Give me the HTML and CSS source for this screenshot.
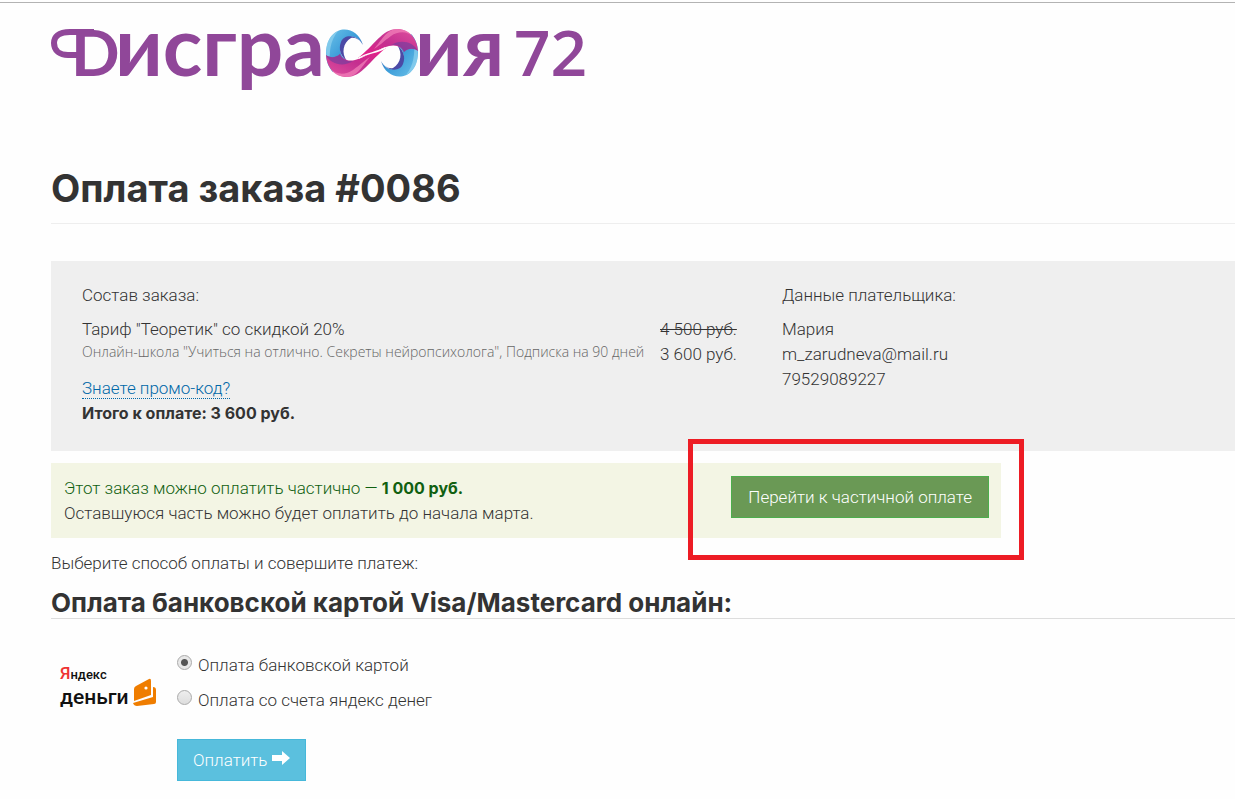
FILE: index.html
```
<!DOCTYPE html>
<html lang="ru">
<head>
  <meta charset="UTF-8">
  <meta name="viewport" content="width=device-width, initial-scale=1.0">
  <title>Оплата заказа #0086</title>
  <link rel="stylesheet" href="styles.css">
</head>
<body>
  <div class="container">
    <header class="header">
      <svg class="logo" width="540" height="70" viewBox="48 26 540 70" role="img" aria-label="Дисграффия 72">
        <defs>
          <linearGradient id="blue" x1="0" y1="0" x2="1" y2="1">
            <stop offset="0" stop-color="#6fc4ea"/>
            <stop offset="0.5" stop-color="#3a9bd8"/>
            <stop offset="1" stop-color="#4a4aa5"/>
          </linearGradient>
          <linearGradient id="pink" x1="0" y1="1" x2="1" y2="0">
            <stop offset="0" stop-color="#e0529f"/>
            <stop offset="0.5" stop-color="#c42f90"/>
            <stop offset="1" stop-color="#ec1c85"/>
          </linearGradient>
          <g id="loop">
            <path fill="url(#blue)" d="M363 45 C357 23 327 23 326 53 C326 62 329 68 333 72 L348 62 C336 54 339 40 351 37 C356 36 360 40 363 45Z"/>
            <path fill="#4b4aa6" d="M363 45 C357 34 344 34 341 42 C338 49 341 57 347 61 C341 53 343 43 351 38 C356 37 360 40 363 45Z"/>
            <path fill="#9bd8f2" opacity="0.6" d="M338 31 C326 37 323 53 330 66 C329 52 330 41 338 31Z"/>
            <path fill="url(#pink)" d="M326 55 C327 70 337 77 347 77 C362 77 370 60 386 48 C374 50 366 57 355 60 C347 62 341 58 340 54 C336 58 330 58 326 55Z"/>
            <path fill="#f483bb" opacity="0.7" d="M331 69 C336 75 346 75 353 70 C360 65 366 59 370 57 C363 65 357 77 347 77 C340 77 334 74 331 69Z"/>
            <path fill="#6a3fa0" opacity="0.6" d="M326 55 C330 58 336 58 340 54 C342 59 346 62 353 61 C344 67 331 65 326 55Z"/>
          </g>
        </defs>
        <path class="logo-swash" d="M94 32 H70 C58 32 54 37 54 43 C54 51 60 55 68 55 H78"/>
        <text class="logo-caps" x="71" y="76">D</text>
        <text class="logo-text" x="115" y="76">исгра</text>
        <use href="#loop"/>
        <use href="#loop" transform="rotate(180 372 53)"/>
        <path fill="none" stroke="#fff" stroke-width="1.5" d="M359 58 C367 53 376 53 385 48"/>
        <text class="logo-text" x="415" y="76">ия</text>
        <text class="logo-digits" x="514" y="76">72</text>
      </svg>
    </header>

    <h1>Оплата заказа #0086</h1>

    <section class="order">
      <div class="order-items">
        <p class="caption">Состав заказа:</p>
        <table class="items">
          <tr>
            <td>Тариф "Теоретик" со скидкой 20%<br>
              <span class="note">Онлайн-школа "Учиться на отлично. Секреты нейропсихолога", Подписка на 90 дней</span></td>
            <td class="price"><del>4 500 руб.</del><br>3 600 руб.</td>
          </tr>
        </table>
        <a href="#promo" class="promo">Знаете промо-код?</a>
        <p><b>Итого к оплате: 3 600 руб.</b></p>
      </div>
      <div class="payer">
        <p class="caption">Данные плательщика:</p>
        <p>Мария</p>
        <p>m_zarudneva@mail.ru</p>
        <p>79529089227</p>
      </div>
    </section>

    <section class="partial">
      <div>
        <p class="green">Этот заказ можно оплатить частично — <b>1 000 руб.</b></p>
        <p>Оставшуюся часть можно будет оплатить до начала марта.</p>
      </div>
      <button type="button" class="btn btn-success">Перейти к частичной оплате</button>
      <div class="highlight"></div>
    </section>

    <p>Выберите способ оплаты и совершите платеж:</p>
    <h2>Оплата банковской картой Visa/Mastercard онлайн:</h2>

    <form class="payment">
      <div class="yandex">
        <div>
          <div class="yandex-top"><span>Я</span>ндекс</div>
          <div class="yandex-bottom">деньги</div>
        </div>
        <svg width="24" height="30" viewBox="0 0 24 30" aria-hidden="true">
          <path fill="#ef7d00" d="M1 11 Q1 9 3 8 L16 1 Q18 0 18 3 V17 L1 23Z"/>
          <path fill="#ef7d00" d="M20 9 Q23 9 23 12 V24 Q23 26 21 26 L4 28 Q1 28 0 25 L20 19Z"/>
          <circle cx="13" cy="10" r="1.6" fill="#fff"/>
        </svg>
      </div>
      <div class="methods">
        <label><input type="radio" name="method" value="card" checked> Оплата банковской картой</label>
        <label><input type="radio" name="method" value="wallet"> Оплата со счета яндекс денег</label>
        <button type="submit" class="btn btn-info">Оплатить
          <svg width="18" height="16" viewBox="0 0 18 16" aria-hidden="true">
            <path fill="#fff" d="M0 5 H10 V1 L18 8 L10 15 V11 H0Z"/>
          </svg>
        </button>
      </div>
    </form>
  </div>
</body>
</html>
```
FILE: styles.css
```
body {
  margin: 2px 0 0;
  border-top: 1px solid #b3b3b3;
  background: #fefefe;
  color: #333;
  font-family: Roboto, Arial, sans-serif;
  font-size: 17px;
  font-weight: 300;
  line-height: 25px;
}

p {
  margin: 0;
}

b {
  font-family: Inter, sans-serif;
  font-size: 16px;
  font-weight: 700;
  line-height: 20px;
}

.container {
  padding-left: 51px;
}

.header {
  padding: 23px 0 68px;
}

.logo {
  display: block;
  margin-left: -3px;
  overflow: visible;
}

.logo-text,
.logo-caps,
.logo-digits {
  fill: #904799;
  font-family: Lato, sans-serif;
  font-weight: 700;
}

.logo-text {
  font-size: 82px;
}

.logo-caps {
  font-size: 64px;
}

.logo-digits {
  font-family: "Open Sans", sans-serif;
  font-size: 64px;
  font-weight: 600;
}

.logo-swash {
  fill: none;
  stroke: #904799;
  stroke-width: 6;
}

h1 {
  margin: 0 0 37px;
  padding-bottom: 11px;
  border-bottom: 1px solid #eee;
  font-family: Inter, sans-serif;
  font-size: 38px;
  font-weight: 700;
  line-height: 48px;
}

h2 {
  margin: 12px 0 34px;
  border-bottom: 1px solid #ddd;
  font-family: Inter, sans-serif;
  font-size: 26px;
  font-weight: 700;
  line-height: 30px;
}

.order {
  display: flex;
  gap: 38px;
  margin-bottom: 12px;
  padding: 22px 0 25px 31px;
  background: #efefef;
}

.caption {
  margin-bottom: 9px;
}

.items {
  width: 662px;
  margin-bottom: 9px;
  border-collapse: collapse;
}

.items td {
  padding: 0;
  vertical-align: top;
}

.items .price {
  width: 84px;
  white-space: nowrap;
}

.note {
  display: block;
  color: #666;
  font-family: "Open Sans", sans-serif;
  font-size: 14px;
  line-height: 20px;
}

.promo {
  border-bottom: 1px dotted #0068a8;
  color: #0068a8;
  text-decoration: none;
}

.partial {
  display: flex;
  justify-content: space-between;
  align-items: flex-start;
  position: relative;
  box-sizing: border-box;
  max-width: 950px;
  margin-bottom: 13px;
  padding: 13px 12px 12px 13px;
  background: #f3f5e4;
}

.green {
  color: #106010;
}

.highlight {
  position: absolute;
  top: -24px;
  right: -23px;
  width: 326px;
  height: 111px;
  border: 5px solid #ed1c24;
  pointer-events: none;
}

.btn {
  padding: 8px 16px;
  border: 1px solid;
  color: #fff;
  font: inherit;
  line-height: 24px;
  cursor: pointer;
}

.btn-success {
  border-color: #4cae4c;
  background: #6a9955;
}

.btn-info {
  align-self: flex-start;
  margin-top: 16px;
  padding: 8px 15px;
  border-color: #46b8da;
  background: #5bc0de;
}

.payment {
  display: flex;
  gap: 20px;
}

.yandex {
  display: flex;
  align-items: flex-end;
  align-self: flex-start;
  justify-content: space-between;
  width: 97px;
  margin-left: 9px;
  padding-top: 9px;
  color: #111;
  font-weight: 500;
}

.yandex-top {
  font-size: 13px;
  line-height: 22px;
}

.yandex-top span {
  color: #e33;
  font-size: 17px;
}

.yandex-bottom {
  font-size: 21px;
  line-height: 22px;
}

.methods {
  display: flex;
  flex-direction: column;
  gap: 10px;
}

.methods label {
  display: flex;
  align-items: center;
  gap: 6px;
}

.methods input {
  appearance: none;
  box-sizing: border-box;
  width: 15px;
  height: 15px;
  margin: 0 0 6px;
  border: 1px solid #aaa;
  border-radius: 50%;
  background: linear-gradient(#eee, #ddd);
}

.methods input:checked {
  background: radial-gradient(circle, #555 0 3px, #e8e8e8 4px);
}
```
